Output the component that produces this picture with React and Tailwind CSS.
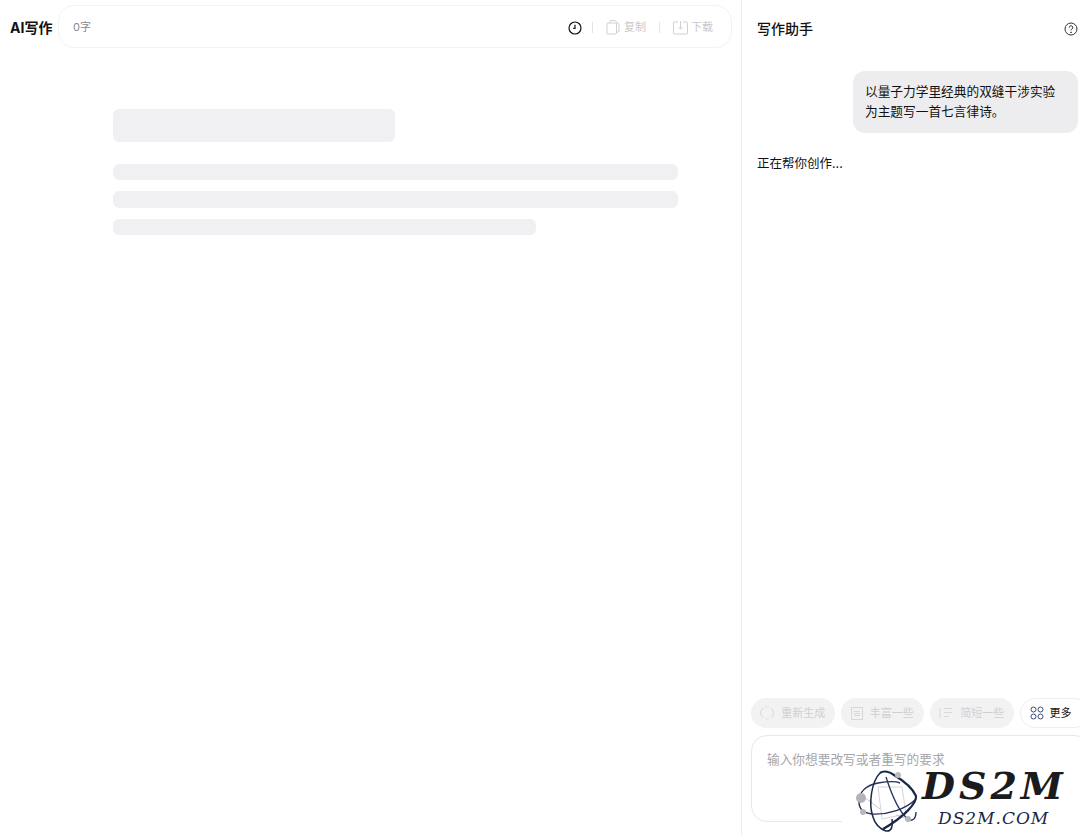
const cjk = { fontFamily: '"Inter", "Noto Sans CJK SC", sans-serif' }

function ClockIcon() {
  return (
    <svg width="14" height="14" viewBox="0 0 14 14" fill="none" stroke="#111" strokeWidth="1.2">
      <circle cx="7" cy="7" r="6" />
      <path d="M7 3.800V7.400H5.200" />
    </svg>
  )
}

function CopyIcon() {
  return (
    <svg width="14" height="15" viewBox="0 0 14 15" fill="none" stroke="#d0d0d3" strokeWidth="1">
      <path d="M4 3V1.500a1 1 0 0 1 1-1H9l4 3.500V11a1 1 0 0 1-1 1h-1.500" />
      <path d="M2 3h8.500v10a1 1 0 0 1-1 1H2a1 1 0 0 1-1-1V4a1 1 0 0 1 1-1Z" />
    </svg>
  )
}

function DownloadIcon() {
  return (
    <svg width="15" height="15" viewBox="0 0 15 15" fill="none" stroke="#d0d0d3" strokeWidth="1">
      <path d="M5 2H1.500a1 1 0 0 0-1 1V13a1 1 0 0 0 1 1h12a1 1 0 0 0 1-1V3a1 1 0 0 0-1-1H10" />
      <path d="M7.500 1v8M5.500 7.200l2 2 2-2" />
    </svg>
  )
}

function HelpIcon() {
  return (
    <svg width="14" height="14" viewBox="0 0 14 14" fill="none" stroke="#333" strokeWidth="1">
      <circle cx="7" cy="7" r="6" />
      <path d="M5.200 5.600a1.800 1.800 0 1 1 2.700 1.500c-.6.400-.9.700-.9 1.300" />
      <circle cx="7" cy="10.300" r=".4" fill="#333" />
    </svg>
  )
}

function RefreshIcon() {
  return (
    <svg width="14" height="14" viewBox="0 0 14 14" fill="none" stroke="#d8d8db" strokeWidth="1">
      <path d="M3 2.200A6 6 0 0 0 3 11.800" />
      <path d="M11 2.200A6 6 0 0 1 11 11.800" />
      <path d="M5 1.200A6 6 0 0 1 9 1.200M5 12.800A6 6 0 0 0 9 12.800" opacity=".5" />
    </svg>
  )
}

function RichIcon() {
  return (
    <svg width="12" height="13" viewBox="0 0 12 13" fill="none" stroke="#d8d8db" strokeWidth="1">
      <rect x=".5" y=".5" width="11" height="12" />
      <path d="M3 4.500h6M3 6.500h6M3 8.500h6" />
    </svg>
  )
}

function ShortIcon() {
  return (
    <svg width="14" height="12" viewBox="0 0 14 12" fill="none" stroke="#d8d8db" strokeWidth="1">
      <path d="M1 1v10M5 1.500h8M5 5.500h8M5 9.500h5" />
    </svg>
  )
}

function MoreIcon() {
  return (
    <svg width="14" height="14" viewBox="0 0 14 14" fill="none" stroke="#3b4a7a" strokeWidth="1">
      <circle cx="3.500" cy="3.500" r="2.500" />
      <circle cx="10.500" cy="3.500" r="2.500" />
      <circle cx="3.500" cy="10.500" r="2.500" />
      <circle cx="10.500" cy="10.500" r="2.500" />
    </svg>
  )
}

// watermark logo
function AtomLogo() {
  return (
    <svg width="62" height="64" viewBox="0 0 62 64" fill="none">
      <path d="M22 18L46 18L50 45L26 50Z" stroke="#d5d6da" strokeWidth="1" />
      <path d="M8 28L24 40M40 46L52 50" stroke="#c8c9ce" strokeWidth="1" />
      <path d="M24 4C16 12 12 34 17 48C19 55 24 60 30 62C36 63 37 56 36 50" stroke="#1c2748" strokeWidth="1.500" />
      <path d="M3 33C2 24 10 16 22 14C34 12 40 12 44 14" stroke="#26315a" strokeWidth="1.400" />
      <path d="M3 33C3 40 8 44 16 45C32 46 50 40 60 30" stroke="#26315a" strokeWidth="1.400" />
      <path d="M24 4C28 1 34 3 38 6C48 12 57 20 60 27C61 34 48 48 27 60" stroke="#1c2748" strokeWidth="2.200" />
      <path d="M30 8C37 30 44 44 52 50C56 53 60 50 60 43" stroke="#26315a" strokeWidth="1.300" />
      <circle cx="5" cy="29" r="5" fill="#b4b4b8" />
      <circle cx="7" cy="43" r="3" fill="#b8b8bc" />
      <circle cx="42" cy="6" r="3" fill="#bcbcc0" />
      <circle cx="52" cy="50" r="3" fill="#b4b8b8" />
    </svg>
  )
}

function Skeleton() {
  return (
    <div className="pl-[113px] pt-[61px] flex flex-col">
      <div className="w-[282px] h-[33px] rounded-md bg-[#f0f0f2]" />
      <div className="w-[565px] h-[16px] rounded-md bg-[#f0f0f2] mt-[22px]" />
      <div className="w-[565px] h-[17px] rounded-md bg-[#f0f0f2] mt-[11px]" />
      <div className="w-[423px] h-[16px] rounded-md bg-[#f0f0f2] mt-[11px]" />
    </div>
  )
}

function Pill({ icon, label }) {
  return (
    <div className="w-[83.500px] h-[30px] rounded-full bg-[#f2f2f3] flex items-center justify-center gap-[7px] text-[11px] text-[#cfcfd2] shrink-0">
      {icon}
      <span>{label}</span>
    </div>
  )
}

export default function App() {
  return (
    <div className="w-[1080px] h-[835px] flex overflow-hidden bg-white relative text-[#111]" style={cjk}>
      <div className="w-[741px] shrink-0 flex flex-col">
        <div className="flex items-center h-[43px] mt-[5px] pl-[10px] pr-[9px]">
          <div className="w-[48px] text-[14px] font-bold whitespace-nowrap pt-[2px]">AI写作</div>
          <div className="flex-1 h-[43px] rounded-2xl border border-[#f3f3f4] flex items-center pl-[14px] pr-[18px] pt-[2px]">
            <span className="text-[11px] text-[#8a8a8f]">0字</span>
            <div className="ml-auto flex items-center text-[11px] text-[#c9c9cc]">
              <ClockIcon />
              <div className="w-px h-[11px] bg-[#e4e4e6] ml-[10px] mr-[13px]" />
              <CopyIcon />
              <span className="ml-[4px]">复制</span>
              <div className="w-px h-[11px] bg-[#e4e4e6] mx-[13px]" />
              <DownloadIcon />
              <span className="ml-[3px]">下载</span>
            </div>
          </div>
        </div>
        <Skeleton />
      </div>

      <div className="w-[339px] shrink-0 border-l border-[#ededee] flex flex-col overflow-hidden pb-[13px]">
        <div className="flex items-center justify-between h-[58px] pl-[15px] pr-[2px]">
          <span className="text-[14px] font-medium pb-[2px]">写作助手</span>
          <HelpIcon />
        </div>
        <div className="flex justify-end pr-[2px] mt-[13px]">
          <div className="w-[225px] h-[62px] rounded-[12px] bg-[#ededef] pl-[12px] pt-[11px] text-[12.700px] leading-[20px]">
            <div className="whitespace-nowrap">以量子力学里经典的双缝干涉实验</div>
            <div className="whitespace-nowrap">为主题写一首七言律诗。</div>
          </div>
        </div>
        <div className="pl-[15px] mt-[22px] text-[12.500px] leading-[18px]">正在帮你创作...</div>

        <div className="mt-auto pl-[9px] flex items-center gap-[6px]">
          <Pill icon={<RefreshIcon />} label="重新生成" />
          <Pill icon={<RichIcon />} label="丰富一些" />
          <Pill icon={<ShortIcon />} label="简短一些" />
          <div className="w-[70px] h-[30px] rounded-full border border-[#efeff0] flex items-center pl-[9px] gap-[6px] text-[11px] shrink-0">
            <MoreIcon />
            <span>更多</span>
          </div>
        </div>
        <div className="ml-[9px] mt-[7px] w-[340px] h-[87px] shrink-0 rounded-2xl border border-[#e8e8ea] pl-[15px] pt-[15px] text-[12.700px] leading-[18px] text-[#a6a6aa]">
          输入你想要改写或者重写的要求
        </div>
      </div>

      {/* watermark over the input */}
      <div className="absolute left-[842px] top-[772px] w-[238px] h-[63px] bg-white" />
      <div className="absolute left-[856px] top-[769px] flex">
        <AtomLogo />
        <div className="ml-[4px] flex flex-col items-start" style={{ fontFamily: '"DejaVu Serif", serif' }}>
          <span className="text-[38px] leading-[34px] font-bold italic text-[#1b1b1d] tracking-[4px] whitespace-nowrap">DS2M</span>
          <span className="ml-[16px] mt-[5px] text-[17px] leading-[20px] italic text-[#1c2748] tracking-[1px] whitespace-nowrap">DS2M.COM</span>
        </div>
      </div>
    </div>
  )
}
